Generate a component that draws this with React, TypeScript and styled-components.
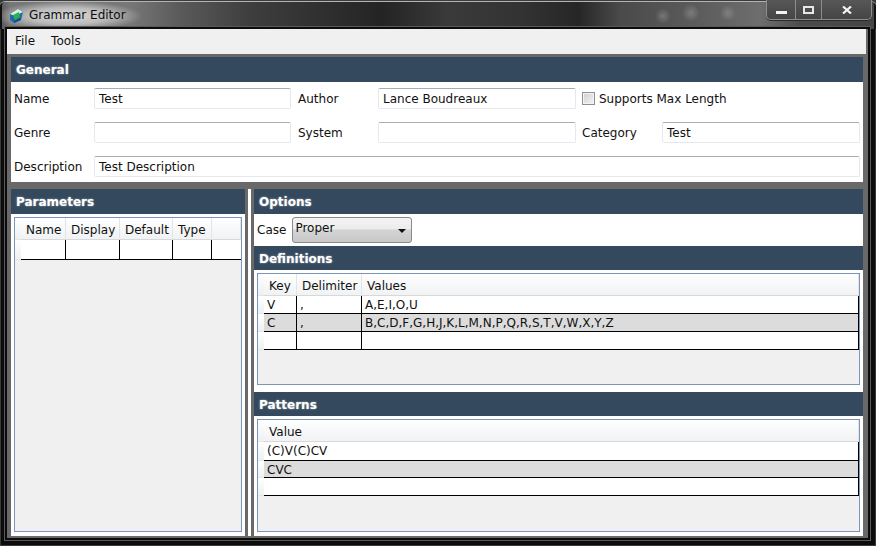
import React from "react";
import styled, { createGlobalStyle } from "styled-components";

const GlobalStyle = createGlobalStyle`
  html, body {
    margin: 0;
    padding: 0;
    background: #000;
  }
  * {
    box-sizing: border-box;
  }
`;

const Window = styled.div`
  width: 876px;
  height: 546px;
  overflow: hidden;
  display: flex;
  flex-direction: column;
  padding: 0 8px 8px 7px;
  font-family: "DejaVu Sans", Verdana, sans-serif;
  font-size: 12px;
  color: #111;
  background: #0c0c0c;
  box-shadow: inset 0 0 0 1px #3a3a3a;
`;

const TitleBar = styled.div`
  height: 29px;
  flex: none;
  display: flex;
  align-items: flex-start;
  margin: 0 -8px 0 -7px;
  padding: 0 4px 0 9px;
  border-top: 1px solid #3c3c3c;
  border-radius: 5px 5px 0 0;
  box-shadow: inset 0 1px 0 #b4b4b4, inset 2px 0 0 #111, inset -2px 0 0 #111;
  background:
    radial-gradient(ellipse 74px 15px at 68px 15px, rgba(255, 255, 255, 0.72), rgba(255, 255, 255, 0.5) 55%, transparent),
    radial-gradient(circle 8px at 663px 15px, rgba(255, 255, 255, 0.2), transparent),
    radial-gradient(circle 9px at 691px 12px, rgba(255, 255, 255, 0.2), transparent),
    radial-gradient(circle 8px at 728px 12px, rgba(255, 255, 255, 0.18), transparent),
    linear-gradient(90deg, #555 0, #777 10px, #777 130px, #5a5a5a 180px, #3e3e3e 250px, #2e2e2e 330px, #242424 382px, #3a3a3a 448px, #333 520px, #262626 578px, #4a4a4a 620px, #5c5c5c 700px, #6e6e6e 760px, #4c4c4c 800px, #444 876px);
`;

const AppIcon = styled.svg`
  margin-top: 8px;
  flex: none;
`;

const WindowTitle = styled.div`
  margin: 6px 0 0 6px;
  color: #0d0d0d;
  font-size: 12px;
  line-height: 16px;
  flex: 1;
`;

const Controls = styled.div`
  display: flex;
  height: 20px;
  margin-top: -1px;
  border: 1px solid #8d8d8d;
  border-top: none;
  border-radius: 0 0 5px 5px;
  box-shadow: 0 1px 0 #2a2a2a;
  background: linear-gradient(#575757, #454545);
`;

const ControlButton = styled.div<{ $w: number; $last?: boolean }>`
  width: ${(p) => p.$w}px;
  display: flex;
  align-items: center;
  justify-content: center;
  border-right: ${(p) => (p.$last ? "none" : "1px solid #8d8d8d")};
`;

const Client = styled.div`
  flex: 1;
  min-height: 0;
  display: flex;
  flex-direction: column;
  background: #696969;
  box-shadow: 0 0 0 2px #0c0c0c, 0 0 0 3px #5a5a5a;
`;

const MenuBar = styled.div`
  height: 25px;
  flex: none;
  display: flex;
  align-items: center;
  gap: 16px;
  padding: 0 0 2px 8px;
  background: #f0f0f0;
  margin-right: 2px;
`;

const MenuItem = styled.span`
  line-height: 20px;
`;

const Content = styled.div`
  flex: 1;
  min-height: 0;
  display: flex;
  flex-direction: column;
  gap: 7px;
  padding: 3px 5px 2px 4px;
`;

const Panel = styled.section`
  background: #fff;
  display: flex;
  flex-direction: column;
`;

const Header = styled.h2<{ $h?: number; $top?: number }>`
  margin: ${(p) => p.$top ?? 0}px 0 0;
  flex: none;
  height: ${(p) => p.$h ?? 25}px;
  line-height: 26px;
  padding-left: 5px;
  background: #35495e;
  color: #fff;
  font-size: 12px;
  font-weight: bold;
  text-shadow: 0 0 2px rgba(255, 255, 255, 0.55);
`;

const GeneralForm = styled.div`
  display: grid;
  grid-template-columns: 80px 204px 80px 204px 80px 198px;
  grid-auto-rows: 21px;
  row-gap: 13px;
  align-items: center;
  padding: 6px 3px 5px;
`;

const Label = styled.label`
  line-height: 23px;
  height: 21px;
`;

const TextBox = styled.div<{ $w: number; $span?: number }>`
  width: ${(p) => p.$w}px;
  height: 21px;
  line-height: 21px;
  padding-left: 4px;
  background: #fff;
  border: 1px solid #e3e9ef;
  border-top-color: #abadb3;
  border-radius: 2px;
  grid-column: span ${(p) => p.$span ?? 1};
`;

const CheckRow = styled.div`
  grid-column: span 2;
  display: flex;
  align-items: center;
  gap: 4px;
`;

const CheckBox = styled.span`
  width: 13px;
  height: 13px;
  flex: none;
  border: 1px solid #8e8f8f;
  background: linear-gradient(135deg, #cfcfcf, #f4f4f4);
  box-shadow: inset 0 0 0 1px #f4f4f4;
`;

const Columns = styled.div`
  flex: 1;
  min-height: 0;
  display: flex;
`;

const LeftPanel = styled(Panel)`
  width: 234px;
  flex: none;
`;

const Splitter = styled.div`
  width: 9px;
  flex: none;
  background: #fff;
  border-left: 3px solid #696969;
  border-right: 3px solid #696969;
`;

const RightPanel = styled(Panel)`
  flex: 1;
  min-width: 0;
`;

const GridBox = styled.div<{ $h: number }>`
  height: ${(p) => p.$h}px;
  flex: none;
  margin: 3px 3px 0;
  background: #f0f0f0;
  border: 1px solid #7a96b8;
  overflow: hidden;
`;

const GridRow = styled.div`
  display: flex;
`;

const Strip = styled.div<{ $h: number }>`
  width: 6px;
  height: ${(p) => p.$h}px;
  flex: none;
  background: linear-gradient(#fff, #eef0f2);
  border-bottom: 1px solid #e6e6e6;
`;

const HeadCell = styled.div<{ $w?: number }>`
  width: ${(p) => (p.$w ? `${p.$w}px` : "auto")};
  flex: ${(p) => (p.$w ? "none" : 1)};
  height: 22px;
  padding-left: 5px;
  line-height: 25px;
  background: linear-gradient(#fff, #f0f2f4);
  border-right: 1px solid #e4e4e4;
  border-bottom: 1px solid #d8d8d8;
`;

const Cell = styled.div<{ $w?: number; $h: number; $shade?: boolean; $open?: boolean }>`
  width: ${(p) => (p.$w ? `${p.$w}px` : "auto")};
  flex: ${(p) => (p.$w ? "none" : 1)};
  height: ${(p) => p.$h}px;
  line-height: 19px;
  padding-left: 3px;
  background: ${(p) => (p.$shade ? "#dcdcdc" : "#fff")};
  border-right: ${(p) => (p.$open ? "none" : "1px solid #000")};
  border-bottom: 1px solid #000;
`;

const CaseRow = styled.div`
  height: 32px;
  flex: none;
  display: flex;
  align-items: center;
  gap: 6px;
  padding-left: 3px;
`;

const Combo = styled.div`
  position: relative;
  width: 120px;
  height: 26px;
  padding-left: 2px;
  line-height: 20px;
  border: 1px solid #8a8a8a;
  border-radius: 3px;
  background: linear-gradient(#f4f4f4, #ececec 45%, #d4d4d4 50%, #c8c8c8);
`;

const ComboArrow = styled.span`
  position: absolute;
  right: 5px;
  top: 11px;
  border-left: 4px solid transparent;
  border-right: 4px solid transparent;
  border-top: 4px solid #111;
`;

type GridData = {
  widths: (number | undefined)[];
  heads: string[];
  rows: string[][];
  rowHeights: number[];
  openEnd?: boolean;
};

const DataGrid = ({ widths, heads, rows, rowHeights, openEnd }: GridData) => (
  <>
    <GridRow>
      <Strip $h={22} />
      {heads.map((h, i) => (
        <HeadCell key={i} $w={widths[i]}>
          {h}
        </HeadCell>
      ))}
    </GridRow>
    {rows.map((row, r) => (
      <GridRow key={r}>
        <Strip $h={rowHeights[r]} />
        {row.map((c, i) => (
          <Cell
            key={i}
            $w={widths[i]}
            $h={rowHeights[r]}
            $shade={r === 1}
            $open={openEnd && i === row.length - 1}
          >
            {c}
          </Cell>
        ))}
      </GridRow>
    ))}
  </>
);

export default function App() {
  return (
    <>
      <GlobalStyle />
      <Window>
        <TitleBar>
          <AppIcon width="14" height="14" viewBox="0 0 14 14">
            <path d="M1 5 L9 0 L14 3 L12 11 L5 14 L1 11 Z" fill="#1c6aa8" />
            <path d="M1 5 L9 0 L14 3 L6 7 Z" fill="#d8f0e4" />
            <path d="M4 6 L10 3 L11 8 L6 11 Z" fill="#2fae4f" />
            <path d="M5 12 L11 9 L12 11 L5 14 Z" fill="#164f8a" />
          </AppIcon>
          <WindowTitle>Grammar Editor</WindowTitle>
          <Controls>
            <ControlButton $w={29}>
              <svg width="11" height="8" viewBox="0 0 11 8">
                <rect y="5" width="11" height="3" fill="#f4f4f4" />
              </svg>
            </ControlButton>
            <ControlButton $w={26}>
              <svg width="11" height="8" viewBox="0 0 11 8">
                <rect x="1" y="1" width="9" height="6" fill="none" stroke="#e8e8e8" strokeWidth="2" />
              </svg>
            </ControlButton>
            <ControlButton $w={49} $last>
              <svg width="10" height="8" viewBox="0 0 10 8">
                <path d="M1 0.5 L9 7.5 M9 0.5 L1 7.5" stroke="#f4f4f4" strokeWidth="2.2" />
              </svg>
            </ControlButton>
          </Controls>
        </TitleBar>
        <Client>
          <MenuBar>
            <MenuItem>File</MenuItem>
            <MenuItem>Tools</MenuItem>
          </MenuBar>
          <Content>
            <Panel>
              <Header>General</Header>
              <GeneralForm>
                <Label>Name</Label>
                <TextBox $w={197}>Test</TextBox>
                <Label>Author</Label>
                <TextBox $w={198}>Lance Boudreaux</TextBox>
                <CheckRow>
                  <CheckBox />
                  <span>Supports Max Length</span>
                </CheckRow>
                <Label>Genre</Label>
                <TextBox $w={197} />
                <Label>System</Label>
                <TextBox $w={198} />
                <Label>Category</Label>
                <TextBox $w={198}>Test</TextBox>
                <Label>Description</Label>
                <TextBox $w={766} $span={5}>
                  Test Description
                </TextBox>
              </GeneralForm>
            </Panel>
            <Columns>
              <LeftPanel>
                <Header>Parameters</Header>
                <GridBox $h={315}>
                  <DataGrid
                    widths={[45, 54, 53, 39, undefined]}
                    heads={["Name", "Display", "Default", "Type", ""]}
                    rows={[["", "", "", "", ""]]}
                    rowHeights={[20]}
                    openEnd
                  />
                </GridBox>
              </LeftPanel>
              <Splitter />
              <RightPanel>
                <Header>Options</Header>
                <CaseRow>
                  Case
                  <Combo>
                    Proper
                    <ComboArrow />
                  </Combo>
                </CaseRow>
                <Header $h={24}>Definitions</Header>
                <GridBox $h={112}>
                  <DataGrid
                    widths={[33, 65, undefined]}
                    heads={["Key", "Delimiter", "Values"]}
                    rows={[
                      ["V", ",", "A,E,I,O,U"],
                      ["C", ",", "B,C,D,F,G,H,J,K,L,M,N,P,Q,R,S,T,V,W,X,Y,Z"],
                      ["", "", ""],
                    ]}
                    rowHeights={[18, 18, 18]}
                  />
                </GridBox>
                <Header $h={24} $top={7}>
                  Patterns
                </Header>
                <GridBox $h={113}>
                  <DataGrid
                    widths={[undefined]}
                    heads={["Value"]}
                    rows={[["(C)V(C)CV"], ["CVC"], [""]]}
                    rowHeights={[19, 17, 18]}
                  />
                </GridBox>
              </RightPanel>
            </Columns>
          </Content>
        </Client>
      </Window>
    </>
  );
}
